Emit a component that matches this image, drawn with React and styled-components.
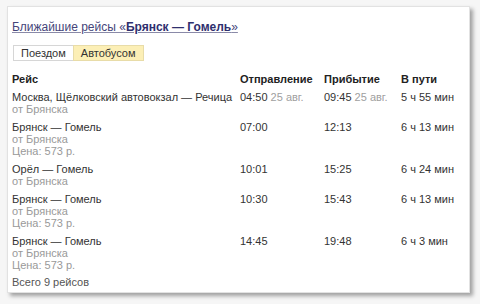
import styled, { createGlobalStyle } from "styled-components";

const Global = createGlobalStyle`
  html, body {
    margin: 0;
    padding: 0;
    background: #f6f6f6;
  }
  body {
    font-family: "Liberation Sans", Arial, sans-serif;
  }
`;

const Page = styled.div`
  width: 480px;
  height: 304px;
  padding: 6px 0 0 7px;
  box-sizing: border-box;
`;

const Card = styled.div`
  width: 463px;
  height: 287px;
  box-sizing: border-box;
  background: #fff;
  border: 1px solid #e2e2e2;
  box-shadow: 3px 3px 4px rgba(0, 0, 0, 0.35);
  padding: 10px 0 0 4px;
`;

const Title = styled.a`
  display: inline-block;
  font-size: 12px;
  line-height: 15px;
  color: #45457a;
  text-decoration: underline;
  text-decoration-color: #8a8aa8;
  cursor: pointer;

  b {
    color: #2f2f6e;
  }
`;

const Tabs = styled.div`
  display: flex;
  margin: 10px 0 0 1px;
`;

const Tab = styled.div`
  height: 16px;
  box-sizing: border-box;
  padding: 0 7px;
  font-size: 11px;
  line-height: 14px;
  color: #333;
  border: 1px solid ${(p) => (p.active ? "#e8dca8" : "#d6d6d6")};
  background: ${(p) => (p.active ? "#fcefb6" : "#fff")};
  margin-left: ${(p) => (p.active ? "-1px" : "0")};
`;

const Grid = styled.div`
  display: grid;
  grid-template-columns: 228px 84px 77px 1fr;
  margin-top: 12px;
  font-size: 11px;
  line-height: 12px;
  color: #333;
`;

const Head = styled.div`
  font-weight: bold;
  color: #222;
  padding-bottom: 6px;
`;

const Cell = styled.div`
  padding-bottom: 6px;
`;

const Sub = styled.div`
  color: #999;
`;

const Gray = styled.span`
  color: #a0a0a0;
`;

const Total = styled.div`
  font-size: 11px;
  line-height: 12px;
  color: #555;
  margin-top: -1px;
`;

const trips = [
  {
    name: "Москва, Щёлковский автовокзал — Речица",
    price: null,
    dep: "04:50",
    arr: "09:45",
    date: "25 авг.",
    dur: "5 ч 55 мин",
  },
  { name: "Брянск — Гомель", price: "573", dep: "07:00", arr: "12:13", dur: "6 ч 13 мин" },
  { name: "Орёл — Гомель", price: null, dep: "10:01", arr: "15:25", dur: "6 ч 24 мин" },
  { name: "Брянск — Гомель", price: "573", dep: "10:30", arr: "15:43", dur: "6 ч 13 мин" },
  { name: "Брянск — Гомель", price: "573", dep: "14:45", arr: "19:48", dur: "6 ч 3 мин" },
];

export default function App() {
  return (
    <Page>
      <Global />
      <Card>
        <Title>
          Ближайшие рейсы «<b>Брянск — Гомель</b>»
        </Title>
        <Tabs>
          <Tab>Поездом</Tab>
          <Tab active>Автобусом</Tab>
        </Tabs>
        <Grid>
          <Head>Рейс</Head>
          <Head>Отправление</Head>
          <Head>Прибытие</Head>
          <Head>В пути</Head>
          {trips.map((t, i) => [
            <Cell key={i + "n"}>
              <div>{t.name}</div>
              <Sub>от Брянска</Sub>
              {t.price && <Sub>Цена: {t.price} р.</Sub>}
            </Cell>,
            <Cell key={i + "d"}>
              {t.dep} {t.date && <Gray>{t.date}</Gray>}
            </Cell>,
            <Cell key={i + "a"}>
              {t.arr} {t.date && <Gray>{t.date}</Gray>}
            </Cell>,
            <Cell key={i + "t"}>{t.dur}</Cell>,
          ])}
        </Grid>
        <Total>Всего 9 рейсов</Total>
      </Card>
    </Page>
  );
}
